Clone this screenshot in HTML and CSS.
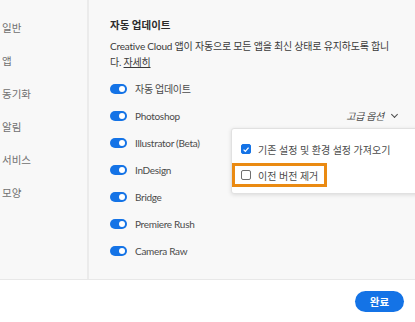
FILE: index.html
```html
<!DOCTYPE html>
<html lang="ko">
<head>
  <meta charset="UTF-8">
  <meta name="viewport" content="width=device-width, initial-scale=1.0">
  <title>앱 설정</title>
  <link rel="stylesheet" href="styles.css">
</head>
<body>
  <div class="main">
    <ul class="sidebar">
      <li>일반</li>
      <li>앱</li>
      <li>동기화</li>
      <li>알림</li>
      <li>서비스</li>
      <li>모양</li>
    </ul>

    <div class="content">
      <h2>자동 업데이트</h2>
      <p class="desc">Creative Cloud 앱이 자동으로 모든 앱을 최신 상태로 유지하도록 합니다. <a href="#">자세히</a></p>

      <div class="row">
        <span class="toggle"></span>
        <span class="label">자동 업데이트</span>
      </div>
      <div class="row">
        <span class="toggle"></span>
        <span class="label">Photoshop</span>
        <span class="advanced">고급 옵션 <span class="chevron"></span></span>
      </div>
      <div class="row">
        <span class="toggle"></span>
        <span class="label">Illustrator (Beta)</span>
      </div>
      <div class="row">
        <span class="toggle"></span>
        <span class="label">InDesign</span>
      </div>
      <div class="row">
        <span class="toggle"></span>
        <span class="label">Bridge</span>
      </div>
      <div class="row">
        <span class="toggle"></span>
        <span class="label">Premiere Rush</span>
      </div>
      <div class="row">
        <span class="toggle"></span>
        <span class="label">Camera Raw</span>
      </div>

      <!-- 고급 옵션 메뉴 -->
      <div class="menu">
        <div class="menu-item first">
          <span class="checkbox checked">
            <svg viewBox="0 0 10 10" width="9" height="9"><path d="M2 5.2 L4.2 7.3 L8.2 2.6" fill="none" stroke="#fff" stroke-width="1.6"/></svg>
          </span>
          기존 설정 및 환경 설정 가져오기
        </div>
        <div class="menu-item highlight">
          <span class="checkbox"></span>
          이전 버전 제거
        </div>
      </div>
    </div>
  </div>

  <div class="footer">
    <button class="done">완료</button>
  </div>
</body>
</html>
```

FILE: styles.css
```css
* {
  margin: 0;
  padding: 0;
  box-sizing: border-box;
}

body {
  font-family: Lato, "Noto Sans CJK KR", sans-serif;
  font-size: 10px;
  color: #4b4b4b;
  width: 415px;
  height: 322px;
  overflow: hidden;
  background: #ffffff;
}

.main {
  display: flex;
  height: 280px;
  background: #f8f8f8;
  border-bottom: 1px solid #e8e8e8;
}

.sidebar {
  list-style: none;
  width: 89px;
  border-right: 2px solid #ebebeb;
  padding: 19px 0 0 2px;
  display: flex;
  flex-direction: column;
  gap: 15px;
}

.sidebar li {
  height: 18px;
  line-height: 18px;
  color: #707070;
  font-size: 10.5px;
}

.content {
  position: relative;
  flex: 1;
  padding: 16px 0 0 21px;
}

.content h2 {
  font-size: 10.5px;
  font-weight: 700;
  color: #2c2c2c;
  line-height: 18px;
}

.desc {
  margin-top: 4px;
  width: 284px;
  line-height: 16px;
  color: #3a3a3a;
  letter-spacing: -0.2px;
  word-break: break-all;
}

.desc a {
  color: #3a3a3a;
}

.row {
  display: flex;
  align-items: center;
  gap: 8px;
  height: 27px;
  letter-spacing: -0.3px;
}

.row:first-of-type {
  margin-top: 5px;
}

.toggle {
  position: relative;
  width: 17px;
  height: 10px;
  border-radius: 5px;
  background: #1473e6;
}

.toggle::after {
  content: '';
  position: absolute;
  right: 2px;
  top: 2px;
  width: 6px;
  height: 6px;
  border-radius: 50%;
  background: #ffffff;
}

.label {
  color: #4b4b4b;
}

.advanced {
  margin-left: auto;
  margin-right: 18px;
  font-style: italic;
  color: #4b4b4b;
  display: flex;
  align-items: center;
  gap: 8px;
}

.chevron {
  width: 5px;
  height: 5px;
  border-right: 1.5px solid #4b4b4b;
  border-bottom: 1.5px solid #4b4b4b;
  transform: rotate(45deg);
  margin-top: -3px;
}

/* 고급 옵션 메뉴 */
.menu {
  position: absolute;
  left: 142px;
  top: 128px;
  width: 190px;
  padding: 10px 0 6px 0;
  background: #ffffff;
  border: 1px solid #e1e1e1;
  border-radius: 3px;
  box-shadow: 0 1px 4px rgba(0, 0, 0, 0.12);
}

.menu-item {
  display: flex;
  align-items: center;
  gap: 7px;
  height: 24px;
  padding-left: 9px;
  color: #4b4b4b;
  white-space: nowrap;
  font-size: 10px;
}

.menu-item.first {
  height: 20px;
  margin-bottom: 4px;
}

.menu-item.highlight {
  width: 95px;
  border: 3px solid #ea8a12;
  padding-left: 6px;
}

.checkbox {
  width: 10px;
  height: 10px;
  border: 1.5px solid #6e6e6e;
  border-radius: 2px;
  display: flex;
  align-items: center;
  justify-content: center;
}

.checkbox.checked {
  background: #1473e6;
  border-color: #1473e6;
}

.footer {
  display: flex;
  justify-content: flex-end;
  padding: 11px 11px 0 0;
}

.done {
  width: 49px;
  height: 21px;
  border: none;
  border-radius: 11px;
  background: #1473e6;
  color: #ffffff;
  font-family: "Noto Sans CJK KR", sans-serif;
  font-weight: 700;
  font-size: 10.5px;
}
```
